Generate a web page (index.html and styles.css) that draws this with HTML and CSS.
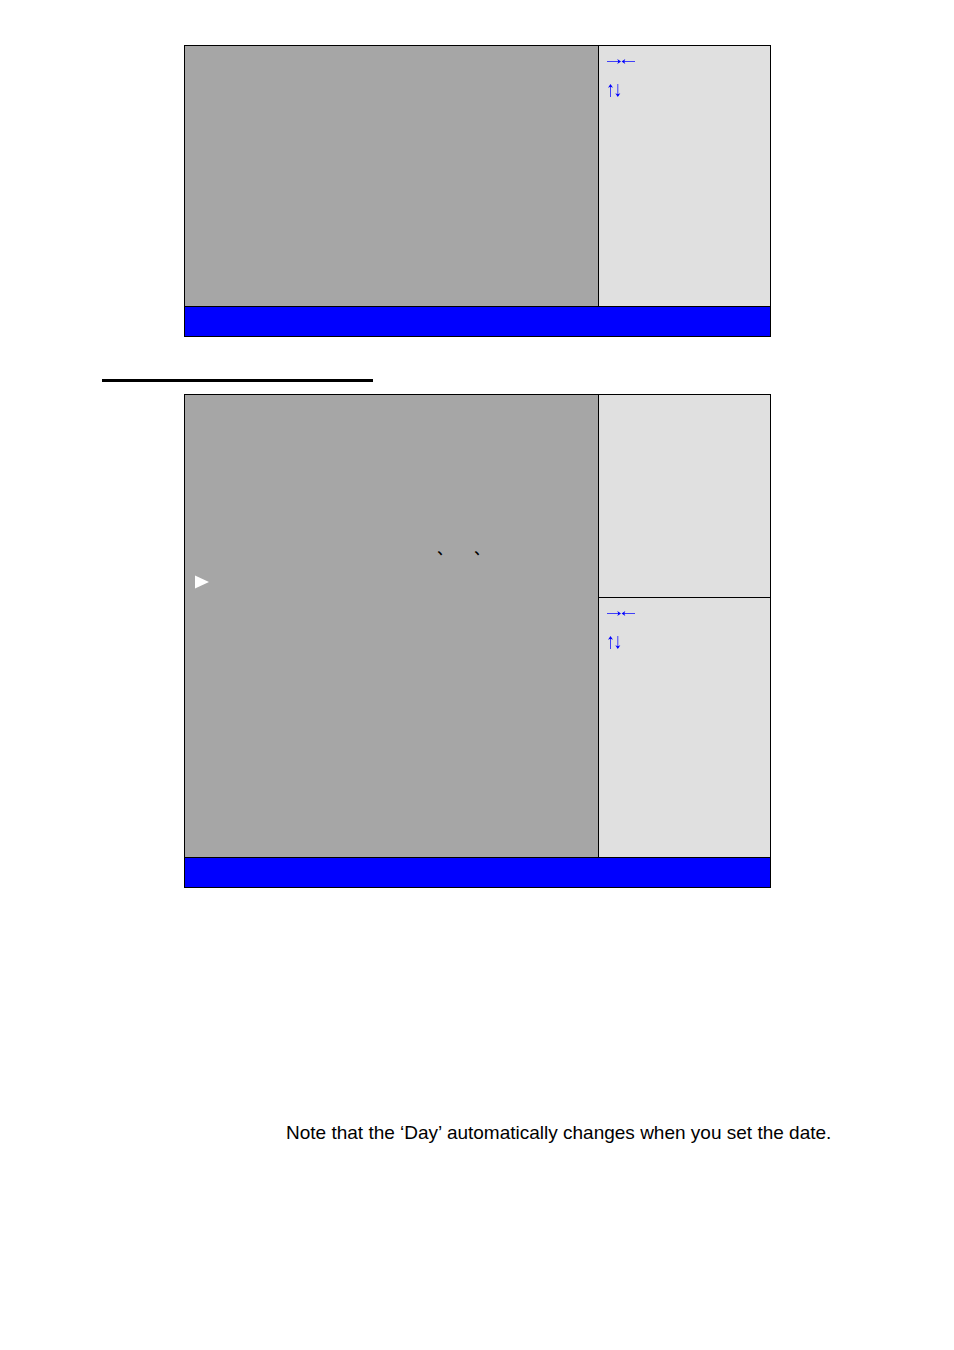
FILE: index.html
```html
<!doctype html>
<html lang="en">
<head>
    <meta charset="UTF-8">
    <meta name="viewport" content="width=device-width, initial-scale=1.0">
    <title>BIOS Setup</title>
    <link rel="stylesheet" href="styles.css">
</head>
<body>

<!-- arrow key icons, used by both screens -->
<svg class="defs" width="0" height="0">
    <symbol id="leftright" viewBox="0 0 28 13">
        <path class="line" d="M0 6.5H12M16 6.5H28"/>
        <path class="head" d="M14 6.5L10.3 4L11.3 6.5L10.3 9zM14.6 6.5L18.3 4L17.3 6.5L18.3 9z"/>
    </symbol>
    <symbol id="updown" viewBox="0 0 28 13">
        <path class="line" d="M3.5 1V13M10.8 0V12"/>
        <path class="head" d="M3.5 0L1 3.7L3.5 2.7L6 3.7zM10.8 13L8.3 9.3L10.8 10.3L13.3 9.3z"/>
    </symbol>
</svg>

<main class="page">
    <section class="screen">
        <div class="body">
            <div class="main short"></div>
            <div class="side">
                <div class="keys">
                    <p><svg width="28" height="13"><use href="#leftright"/></svg></p>
                    <p><svg width="28" height="13"><use href="#updown"/></svg></p>
                </div>
            </div>
        </div>
        <div class="bar"></div>
    </section>

    <hr class="rule">

    <section class="screen">
        <div class="body">
            <div class="main tall">
                <p class="marks"><span>、</span><span>、</span></p>
                <p class="item">
                    <svg width="14" height="14" viewBox="0 0 14 14"><path d="M0 0.5L14 7L0 13.5z" fill="#fff"/></svg>
                </p>
            </div>
            <div class="side">
                <div class="help"></div>
                <div class="keys">
                    <p><svg width="28" height="13"><use href="#leftright"/></svg></p>
                    <p><svg width="28" height="13"><use href="#updown"/></svg></p>
                </div>
            </div>
        </div>
        <div class="bar"></div>
    </section>

    <p class="note">Note that the ‘Day’ automatically changes when you set the date.</p>
</main>

</body>
</html>
```

FILE: styles.css
```css
body{
    margin: 0;
    background-color: #fff;
    color: #000;
    font-family: "Liberation Sans", Arial, "Noto Sans CJK SC", sans-serif;
}
p{
    margin: 0;
}
.defs{
    display: block;
}
.page{
    padding: 45px 100px 200px 102px;
}
.screen{
    margin: 0 83px 0 82px;
    border: 1px solid #000;
}
.body{
    display: grid;
    grid-template-columns: 1fr 172px;
}
.main{
    background-color: #a6a6a6;
}
.short{
    min-height: 260px;
}
.tall{
    box-sizing: border-box;
    min-height: 462px;
    padding: 141px 10px 0;
}
.side{
    display: flex;
    flex-direction: column;
    border-left: 1px solid #000;
    background-color: #e0e0e0;
}
.help{
    height: 202px;
    border-bottom: 1px solid #000;
}
.keys{
    padding: 1px 8px;
}
.keys p{
    display: flex;
    align-items: center;
    height: 29px;
}
.line{
    fill: none;
    stroke: #4040f8;
}
.head{
    fill: #00f;
}
.bar{
    height: 29px;
    border-top: 1px solid #000;
    background-color: #00f;
}
.rule{
    width: 271px;
    height: 3px;
    margin: 42px 0 12px;
    border: 0;
    background-color: #000;
}
.marks{
    display: flex;
    gap: 22px;
    padding-left: 242px;
    font-size: 15px;
    font-weight: 500;
    line-height: 26px;
}
.item{
    display: flex;
    padding-top: 13px;
}
.note{
    margin-top: 230px;
    padding-left: 184px;
    font-size: 19px;
    line-height: 30px;
}
```
